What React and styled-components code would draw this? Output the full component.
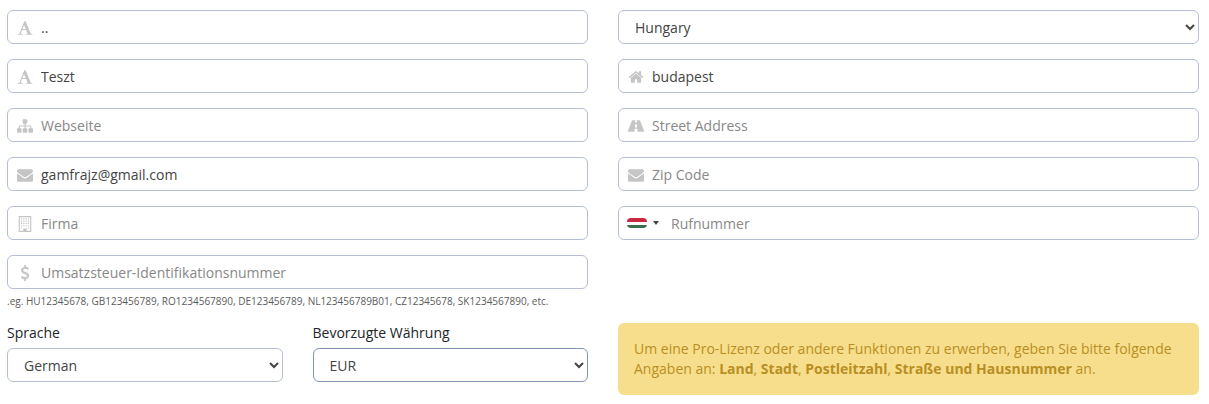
import React from 'react'
import styled, { createGlobalStyle } from 'styled-components'

const GlobalStyle = createGlobalStyle`
  * {
    box-sizing: border-box;
  }

  body {
    margin: 0;
    background: #fff;
    color: #212529;
    font-family: "Open Sans", "Noto Sans", sans-serif;
    font-size: 14px;
    line-height: 20px;
  }
`

const Form = styled.form`
  display: grid;
  grid-template-columns: 1fr 1fr;
  column-gap: 30px;
  padding: 10px 10px 0 7px;
`

const Column = styled.div`
  display: flex;
  flex-direction: column;
  gap: 15px;
`

const Field = styled.div`
  display: flex;
  align-items: center;
  height: 34px;
  padding-left: ${props => props.$indent || 9}px;
  border: 1px solid #b5bfd3;
  border-radius: 6px;
  background: #fff;
`

const Icon = styled.svg`
  flex: 0 0 auto;
  width: 16px;
  height: 16px;
  margin: 2px 8px 0 0;
  fill: #c5c5c5;
`

const Input = styled.input`
  flex: 1;
  min-width: 0;
  height: 32px;
  padding: 0;
  border: 0;
  outline: 0;
  background: transparent;
  color: #444;
  font: inherit;

  &::placeholder {
    color: #888;
    opacity: 1;
  }
`

const Select = styled.select`
  display: block;
  width: 100%;
  height: 34px;
  padding: 0 0 0 12px;
  border: 1px solid ${props => props.$active ? '#8494b8' : '#b5bfd3'};
  border-radius: 6px;
  background: #fff;
  color: #444;
  font: inherit;
`

const Flag = styled.span`
  width: 20px;
  height: 10px;
  border-radius: 4px;
  background: linear-gradient(#c9283e 0 35%, #fff 35% 67%, #3b6f4b 67%);
`

const Caret = styled.span`
  margin: 0 12px 0 6px;
  border: 3px solid transparent;
  border-top: 4px solid #444;
  border-bottom: 0;
`

const Hint = styled.small`
  margin-top: -10px;
  color: #5c5c5c;
  font-size: 10px;
  line-height: 14px;
`

const Preferences = styled.div`
  display: grid;
  grid-template-columns: 1fr 1fr;
  column-gap: 30px;
  margin-top: 15px;
`

const Label = styled.label`
  display: block;
  margin-bottom: 5px;
`

const Notice = styled.div`
  height: 72px;
  margin-top: 15px;
  padding: 16px;
  border-radius: 6px;
  background: #f7de8c;
  color: #b98f23;
`

const icons = {
  font: 'M789 559l-170 450q33 0 136.5 2t160.5 2q19 0 57-2-87-253-184-452zm-725 1105l2-79q23-7 56-12.5t57-10.5 49.5-14.5 44.5-29 31-50.5l237-616 280-724h128q8 14 11 21l205 480q33 78 106 257.5t114 274.5q15 34 58 144.5t72 168.5q20 45 35 57 19 15 88 29.5t84 20.5q6 38 6 57 0 5-.5 13.5t-.5 12.5q-63 0-190-8t-191-8q-76 0-215 7t-178 8q0-43 4-78l131-28q1 0 12.5-2.5t15.5-3.5 14.5-4.5 15-6.5 11-8 9-11 2.5-14q0-16-31-96.5t-72-177.5-42-100l-450-2q-26 58-76.5 195.5t-50.5 162.5q0 22 14 37.5t43.5 24.5 48.5 13.5 57 8.5 41 4q1 19 1 58 0 9-2 27-58 0-174.5-10t-174.5-10q-8 0-26.5 4t-21.5 4q-80 14-188 14z',
  sitemap: 'M1792 1248v320q0 40-28 68t-68 28h-320q-40 0-68-28t-28-68v-320q0-40 28-68t68-28h96v-192h-512v192h96q40 0 68 28t28 68v320q0 40-28 68t-68 28h-320q-40 0-68-28t-28-68v-320q0-40 28-68t68-28h96v-192h-512v192h96q40 0 68 28t28 68v320q0 40-28 68t-68 28h-320q-40 0-68-28t-28-68v-320q0-40 28-68t68-28h96v-192q0-52 38-90t90-38h512v-192h-96q-40 0-68-28t-28-68v-320q0-40 28-68t68-28h320q40 0 68 28t28 68v320q0 40-28 68t-68 28h-96v192h512q52 0 90 38t38 90v192h96q40 0 68 28t28 68z',
  envelope: 'M1792 710v794q0 66-47 113t-113 47h-1472q-66 0-113-47t-47-113v-794q44 49 101 87 362 246 497 345 57 42 92.5 65.5t94.5 48 110 24.5h2q51 0 110-24.5t94.5-48 92.5-65.5q170-123 498-345 57-39 100-87zm0-294q0 79-49 151t-122 123q-376 261-468 325-10 7-42.5 31t-54 38.5-52 32.5-57.5 27-50 9h-2q-23 0-50-9t-57.5-27-52-32.5-54-38.5-42.5-31q-91-64-262-182.5t-205-142.5q-62-42-117-115.5t-55-136.5q0-78 41.5-130t118.5-52h1472q65 0 112.5 47t47.5 113z',
  building: 'M192 0h1408v1792h-1408zM320 128v1536h384v-256h384v256h384v-1536zM448 256h128v128h-128zM704 256h128v128h-128zM960 256h128v128h-128zM1216 256h128v128h-128zM448 512h128v128h-128zM704 512h128v128h-128zM960 512h128v128h-128zM1216 512h128v128h-128zM448 768h128v128h-128zM704 768h128v128h-128zM960 768h128v128h-128zM1216 768h128v128h-128zM448 1024h128v128h-128zM704 1024h128v128h-128zM960 1024h128v128h-128zM1216 1024h128v128h-128zM448 1280h128v128h-128zM1216 1280h128v128h-128z',
  dollar: 'M1362 1185q0 153-99.5 263.5t-258.5 136.5v175q0 14-9 23t-23 9h-135q-13 0-22.5-9.5t-9.5-22.5v-175q-66-9-127.5-31t-101.5-44.5-74-48-46.5-37.5-17.5-18q-17-21-2-41l103-135q7-10 23-12 15-2 24 9l2 2q113 99 243 125 37 8 74 8 81 0 142.5-43t61.5-122q0-28-15-53t-33.5-42-58.5-37.5-66-32-80-32.5q-39-16-61.5-25t-61.5-26.5-62.5-31-56.5-35.5-53.5-42.5-43.5-49-35.5-58-21-66.5-8.5-78q0-138 98-242t255-134v-180q0-13 9.5-22.5t22.5-9.5h135q14 0 23 9t9 23v176q57 6 110.5 23t87 33.5 63.5 37.5 39 29 15 14q17 18 5 38l-81 146q-8 15-23 16-14 3-27-7-3-3-14.5-12t-39-26.5-58.5-32-74.5-26-85.5-11.5q-95 0-155 43t-60 111q0 26 8.5 48t29.5 41.5 39.5 33 56 31 60.5 27 70 27.5q53 20 81 31.5t76 35 75.5 42.5 62 50 53 63.5 31.5 76.5 13 94z',
  home: 'M1472 992v480q0 26-19 45t-45 19h-384v-384h-256v384h-384q-26 0-45-19t-19-45v-480q0-1 .5-3t.5-3l575-474 575 474q1 2 1 6zm223-69l-62 74q-8 9-21 11h-3q-13 0-21-7l-692-577-692 577q-12 8-24 7-13-2-21-11l-62-74q-8-10-7-23.5t11-21.5l719-599q32-26 76-26t76 26l244 204v-195q0-14 9-23t23-9h192q14 0 23 9t9 23v408l219 182q10 8 11 21.5t-7 23.5z',
  road: 'M1023 1048v-4l-24-320q-1-13-11-22.5t-23-9.5h-138q-13 0-23 9.5t-11 22.5l-24 320v4q-1 12 8 20t21 8h196q12 0 21-8t8-20zM1792 1463q0 73-46 73h-704q13 0 22-9.5t8-22.5l-20-256q-1-13-11-22.5t-23-9.5h-244q-13 0-23 9.5t-11 22.5l-20 256q-1 13 8 22.5t22 9.5h-704q-46 0-46-73 0-54 26-116l417-1044q8-19 26-33t38-14h339q-13 0-23 9.5t-11 22.5l-15 192q-1 14 8 23t22 9h138q13 0 22-9t8-23l-15-192q-1-13-11-22.5t-23-9.5h339q20 0 38 14t26 33l417 1044q26 62 26 116z'
}

const IconField = ({ icon, value, placeholder }) => (
  <Field>
    <Icon viewBox='0 0 1792 1792' fillRule='evenodd'>
      <path d={icons[icon]} />
    </Icon>
    <Input defaultValue={value} placeholder={placeholder} />
  </Field>
)

const App = () => (
  <>
    <GlobalStyle />
    <Form>
      <Column>
        <IconField icon='font' value='..' />
        <IconField icon='font' value='Teszt' />
        <IconField icon='sitemap' placeholder='Webseite' />
        <IconField icon='envelope' value='gamfrajz@gmail.com' />
        <IconField icon='building' placeholder='Firma' />
        <IconField icon='dollar' placeholder='Umsatzsteuer-Identifikationsnummer' />
        <Hint>.eg. HU12345678, GB123456789, RO1234567890, DE123456789, NL123456789B01, CZ12345678, SK1234567890, etc.</Hint>
      </Column>
      <Column>
        <Select defaultValue='Hungary'>
          <option>Hungary</option>
        </Select>
        <IconField icon='home' value='budapest' />
        <IconField icon='road' placeholder='Street Address' />
        <IconField icon='envelope' placeholder='Zip Code' />
        <Field $indent={8}>
          <Flag />
          <Caret />
          <Input placeholder='Rufnummer' />
        </Field>
      </Column>
      <Preferences>
        <div>
          <Label htmlFor='language'>Sprache</Label>
          <Select id='language' defaultValue='German'>
            <option>German</option>
          </Select>
        </div>
        <div>
          <Label htmlFor='currency'>Bevorzugte Währung</Label>
          <Select id='currency' defaultValue='EUR' $active>
            <option>EUR</option>
          </Select>
        </div>
      </Preferences>
      <Notice>
        Um eine Pro-Lizenz oder andere Funktionen zu erwerben, geben Sie bitte folgende Angaben an: <b>Land</b>, <b>Stadt</b>, <b>Postleitzahl</b>, <b>Straße und Hausnummer</b> an.
      </Notice>
    </Form>
  </>
)

export default App
